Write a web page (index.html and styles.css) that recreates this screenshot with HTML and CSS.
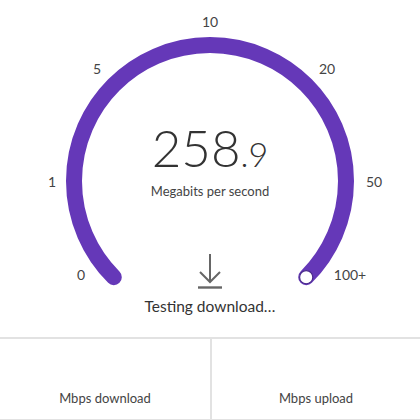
FILE: index.html
```html
<!DOCTYPE html>
<html lang="en">
<head>
    <meta charset="UTF-8">
    <meta name="viewport" content="width=device-width, initial-scale=1.0">
    <title>Speed Test</title>
    <link rel="stylesheet" href="styles.css">
</head>
<body>
    <div class="gauge">
        <svg class="dial" width="420" height="337" viewBox="0 0 420 337">
            <path d="M113.8 277.2 A136 136 0 1 1 306.2 277.2" fill="none" stroke="#6538b8" stroke-width="16" stroke-linecap="round"/>
            <circle cx="306.2" cy="277.2" r="6.6" fill="#fff" stroke="#4a2a8c" stroke-width="1.2"/>
        </svg>
        <span class="tick tick-10">10</span>
        <span class="tick tick-5">5</span>
        <span class="tick tick-20">20</span>
        <span class="tick tick-1">1</span>
        <span class="tick tick-50">50</span>
        <span class="tick tick-0">0</span>
        <span class="tick tick-100">100+</span>

        <div class="readout">
            <div class="speed"><span class="int">258</span><span class="dec">.9</span></div>
            <div class="unit">Megabits per second</div>
        </div>

        <div class="status">
            <svg class="status-icon" width="26" height="36" viewBox="0 0 26 36">
                <path d="M13 1 V29 M3 19 L13 29 L23 19" fill="none" stroke="#666" stroke-width="2"/>
                <path d="M1 34.5 H25" stroke="#666" stroke-width="2.4"/>
            </svg>
            <div class="status-text">Testing download…</div>
        </div>
    </div>

    <div class="results">
        <div class="result-cell">Mbps download</div>
        <div class="result-cell">Mbps upload</div>
    </div>
</body>
</html>
```

FILE: styles.css
```css
body {
    margin: 0;
    font-family: Lato, "Open Sans", sans-serif;
    color: #333;
    background: #fff;
}
.gauge {
    position: relative;
    height: 337px;
    display: flex;
    flex-direction: column;
    align-items: center;
}
.dial {
    position: absolute;
    left: 0;
    top: 0;
}
.tick {
    position: absolute;
    font-size: 14px;
    color: #444;
    line-height: 1;
    transform: translate(-50%, -50%);
}
.tick-10 { left: 210px; top: 22px; }
.tick-5 { left: 97px; top: 69px; }
.tick-20 { left: 327px; top: 69px; }
.tick-1 { left: 52px; top: 182px; }
.tick-50 { left: 374px; top: 182px; }
.tick-0 { left: 81px; top: 275px; }
.tick-100 { left: 350px; top: 275px; }

.readout {
    position: relative;
    margin-top: 122px;
    text-align: center;
}
.speed {
    line-height: 1;
    color: #333;
    font-weight: 300;
}
.speed .int {
    font-size: 51px;
}
.speed .dec {
    font-size: 34px;
}
.unit {
    margin-top: 10px;
    font-size: 13px;
    color: #444;
}
.status {
    position: relative;
    margin-top: 54px;
    display: flex;
    flex-direction: column;
    align-items: center;
}
.status-text {
    margin-top: 8px;
    font-size: 15.5px;
    color: #333;
}
.results {
    display: grid;
    grid-template-columns: 1fr 1fr;
    height: 80px;
    border-top: 2px solid #e2e2e2;
    border-bottom: 2px solid #e2e2e2;
}
.result-cell {
    display: flex;
    align-items: flex-end;
    justify-content: center;
    padding-bottom: 13px;
    font-size: 13px;
    color: #444;
}
.result-cell + .result-cell {
    border-left: 2px solid #e2e2e2;
}
```
